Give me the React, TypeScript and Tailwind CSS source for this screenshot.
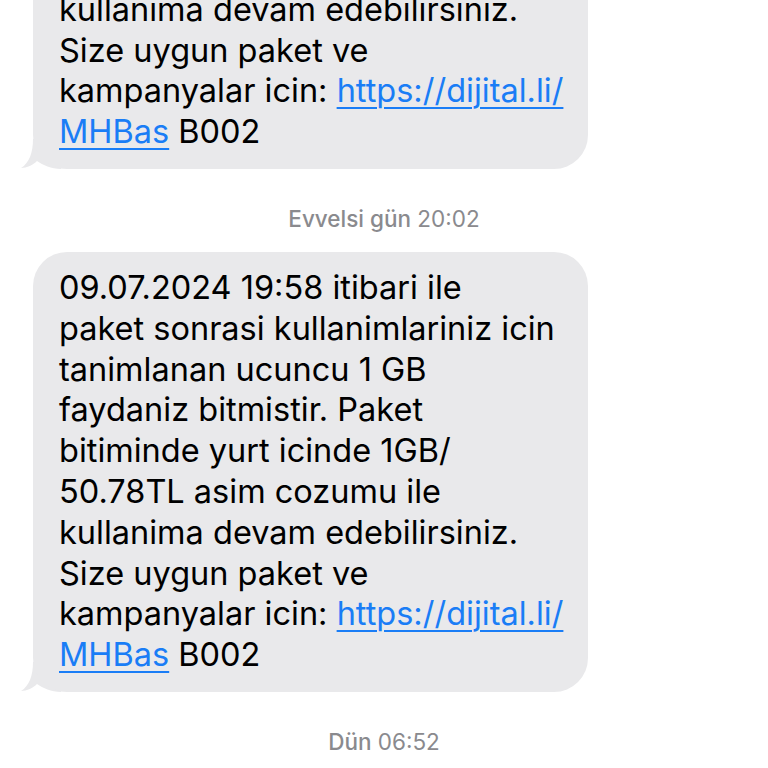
import React from 'react';

const lines: React.ReactNode[] = [
  '09.07.2024 19:58 itibari ile',
  'paket sonrasi kullanimlariniz icin',
  'tanimlanan ucuncu 1 GB',
  'faydaniz bitmistir. Paket',
  'bitiminde yurt icinde 1GB/',
  '50.78TL asim cozumu ile',
  'kullanima devam edebilirsiniz.',
  'Size uygun paket ve',
  <>
    kampanyalar icin: <a className="text-[#1a7df6] underline decoration-[1.5px] underline-offset-[5px]">https://dijital.li/</a>
  </>,
  <>
    <a className="text-[#1a7df6] underline decoration-[1.5px] underline-offset-[5px]">MHBas</a> B002
  </>,
];

function Bubble({ className = '' }: { className?: string }) {
  return (
    <div className={`relative w-[555px] ml-[33px] ${className}`}>
      <svg
        className="absolute left-[-12px] bottom-0"
        width="40"
        height="34"
        viewBox="0 0 40 34"
      >
        <path d="M22 0 L40 0 L40 34 C30 34 22 30 16 26 C12 30 6 33 0 33 C8 28 12 18 12 4 Z" fill="#e9e9eb" />
      </svg>
      <div className="relative rounded-[34px] bg-[#e9e9eb] px-[26px] py-[16px]">
        {lines.map((l, i) => (
          <div key={i} className="whitespace-nowrap text-[32.5px] leading-[40.8px] text-black">
            {l}
          </div>
        ))}
      </div>
    </div>
  );
}

function Stamp({ day, time }: { day: string; time: string }) {
  return (
    <div className="text-center text-[22.5px] leading-[24px] text-[#8a8a8e]">
      <span className="font-medium">{day}</span> {time}
    </div>
  );
}

export default function App() {
  return (
    <div className="w-[768px] h-[768px] overflow-hidden bg-white" style={{ fontFamily: 'Inter, "Noto Sans", sans-serif' }}>
      <Bubble className="mt-[-271px]" />
      <div className="mt-[38px] mb-[21px]">
        <Stamp day="Evvelsi gün" time="20:02" />
      </div>
      <Bubble />
      <div className="mt-[38px]">
        <Stamp day="Dün" time="06:52" />
      </div>
    </div>
  );
}
